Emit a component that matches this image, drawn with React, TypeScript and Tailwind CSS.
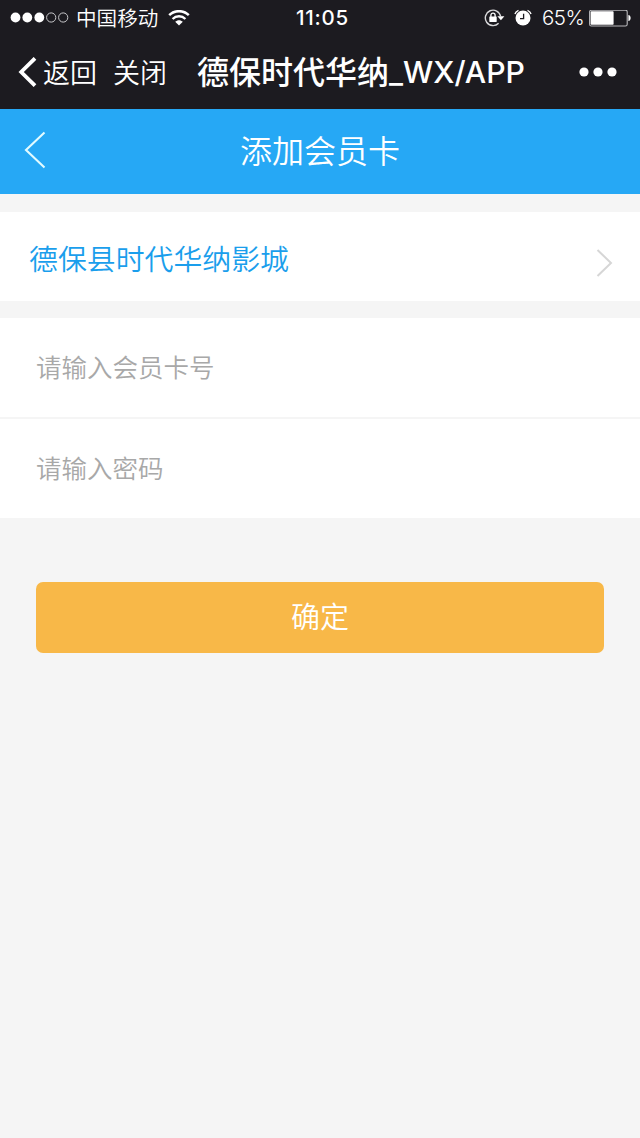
import React, { useState } from 'react';

// ──────────────────────────────────────────────
// Phone status bar
// ──────────────────────────────────────────────
const SignalDots = () => (
  <svg width="59" height="12" viewBox="0 0 59 12" fill="none">
    <circle cx="5.5" cy="5.5" r="4.9" fill="#fff" />
    <circle cx="17.3" cy="5.5" r="4.9" fill="#fff" />
    <circle cx="29.3" cy="5.5" r="4.9" fill="#fff" />
    <circle cx="41.2" cy="5.5" r="4.6" stroke="#c9c9cc" strokeWidth="1" />
    <circle cx="53.2" cy="5.5" r="4.6" stroke="#c9c9cc" strokeWidth="1" />
  </svg>
);

const WifiIcon = () => (
  <svg width="22" height="17" viewBox="0 0 22 17" fill="none" stroke="#fff">
    <path d="M1.2 5.2C6.6 -.2 15.4 -.2 20.8 5.2" strokeWidth="2.5" />
    <path d="M4.6 9C8.2 5.4 13.8 5.4 17.4 9" strokeWidth="2.4" />
    <path d="M7.2 11.8C9.4 9.6 12.6 9.6 14.8 11.8L11 15.6Z" fill="#fff" stroke="none" />
  </svg>
);

const RotationLockIcon = () => (
  <svg width="21" height="18" viewBox="0 0 21 18" fill="none">
    <path d="M14.6 14.2A7.7 7.7 0 1 1 16.6 7.4" stroke="#d8d8da" strokeWidth="1.4" />
    <path d="M13.4 7.3H20.4L16.9 11.2Z" fill="#fff" />
    <rect x="5.3" y="7.6" width="7.4" height="5.4" rx=".4" fill="#fff" />
    <path d="M6.9 8V6.3a2.1 2.1 0 0 1 4.2 0V8" stroke="#fff" strokeWidth="1.3" />
  </svg>
);

const AlarmIcon = () => (
  <svg width="18" height="18" viewBox="0 0 18 18" fill="none">
    <circle cx="9" cy="9" r="7.5" fill="#fff" />
    <path d="M9.6 4.8V9.6H6" stroke="#1c1b20" strokeWidth="1.3" />
    <path d="M1 5C1.5 3.3 2.7 2.1 4.5 1.4M17 5C16.5 3.3 15.3 2.1 13.5 1.4" stroke="#fff" strokeWidth="1.5" />
  </svg>
);

const BatteryIcon = () => (
  <svg width="42" height="17" viewBox="0 0 42 17" fill="none">
    <rect x=".6" y=".1" width="37.6" height="15.9" rx="1.8" stroke="#b9b9bc" strokeWidth="1.1" />
    <rect x="1.6" y="1.2" width="23" height="13.6" rx=".8" fill="#fff" />
    <path d="M39.4 5C42.4 5.4 42.4 10.6 39.4 11Z" fill="#fff" />
  </svg>
);

const StatusBar = () => (
  <div className="grid h-9 grid-cols-[1fr_auto_1fr] items-center pl-[10px] pr-[9px] text-white">
    <div className="flex items-center">
      <SignalDots />
      <span className="ml-[7px] pt-[2px] text-[20.6px] font-[350] leading-none">中国移动</span>
      <span className="ml-[10px]"><WifiIcon /></span>
    </div>
    <span className="pl-[4px] text-[20.5px] font-medium leading-none tracking-[0.8px]">11:05</span>
    <div className="flex items-center justify-end">
      <RotationLockIcon />
      <span className="ml-[9px]"><AlarmIcon /></span>
      <span className="ml-[10px] mr-[5px] text-[20.5px] font-[350] leading-none tracking-[-0.6px]">65%</span>
      <BatteryIcon />
    </div>
  </div>
);

// Browser bar of the host app
const BrowserBar = () => (
  <div className="flex h-[73px] items-center pb-px pl-[18px] pr-[23px] text-white">
    <button type="button" className="flex items-center">
      <svg width="19" height="30" viewBox="0 0 19 30" fill="none">
        <path d="M17 1.3L3.2 15L17 28.7" stroke="#fff" strokeWidth="3.8" />
      </svg>
      <span className="ml-[6px] pt-[3px] text-[27px] font-[350] leading-none">返回</span>
    </button>
    <button type="button" className="ml-4 pt-[3px] text-[27px] font-[350] leading-none">关闭</button>
    <h1 className="ml-[30px] whitespace-nowrap pt-px text-[32px] font-medium leading-none">
      德保时代华纳<span className="relative -top-px text-[30.2px]">_WX/APP</span>
    </h1>
    <button type="button" className="ml-auto" aria-label="更多">
      <svg width="38" height="10" viewBox="0 0 38 10" fill="#fff">
        <circle cx="5" cy="5" r="4.6" />
        <circle cx="19" cy="5" r="4.6" />
        <circle cx="33" cy="5" r="4.6" />
      </svg>
    </button>
  </div>
);

const PageHeader = () => (
  <div className="grid h-[85px] grid-cols-[80px_1fr_80px] items-center bg-[#26a8f5] pb-[3px] text-white">
    <button type="button" className="pl-6" aria-label="返回">
      <svg width="22" height="38" viewBox="0 0 22 38" fill="none">
        <path d="M20.5 1.5L2 19L20.5 36.5" stroke="#e2fbff" strokeWidth="2.1" />
      </svg>
    </button>
    <h2 className="pt-[3px] text-center text-[32px] font-[350] leading-none">添加会员卡</h2>
  </div>
);

const inputClass =
  'block w-full bg-transparent px-9 text-[25.5px] font-[350] text-[#333] outline-none placeholder:text-[#a8a8a8] placeholder:opacity-100';

function App() {
  const [cardNo, setCardNo] = useState('');
  const [password, setPassword] = useState('');

  return (
    <div className="min-h-[1138px] bg-[#f5f5f5] font-['Inter','Noto_Sans_CJK_SC',sans-serif]">
      <header className="bg-[#1c1b20]">
        <StatusBar />
        <BrowserBar />
      </header>
      <PageHeader />

      <button type="button" className="mt-[18px] flex h-[89px] w-full items-center justify-between bg-white pl-[29px] pr-[27px]">
        <span className="pt-[7px] text-[28.9px] font-[350] leading-none text-[#1a9eec]">德保县时代华纳影城</span>
        <svg className="mt-[13px]" width="17" height="28" viewBox="0 0 17 28" fill="none">
          <path d="M1.5 1L15 14L1.5 27" stroke="#d6d6d6" strokeWidth="2" />
        </svg>
      </button>

      <form onSubmit={(e) => e.preventDefault()}>
        <div className="mt-[17px] divide-y-2 divide-[#f5f5f5] bg-white">
          <input
            className={`${inputClass} h-[101px]`}
            placeholder="请输入会员卡号"
            value={cardNo}
            onChange={(e) => setCardNo(e.target.value)}
          />
          <input
            type="password"
            className={`${inputClass} h-[99px]`}
            placeholder="请输入密码"
            value={password}
            onChange={(e) => setPassword(e.target.value)}
          />
        </div>
        <div className="px-9 pt-16">
          <button type="submit" className="h-[71px] w-full rounded-[7px] bg-[#f8b848] text-[29px] font-[350] leading-none text-white">
            确定
          </button>
        </div>
      </form>
    </div>
  );
}

export default App;
